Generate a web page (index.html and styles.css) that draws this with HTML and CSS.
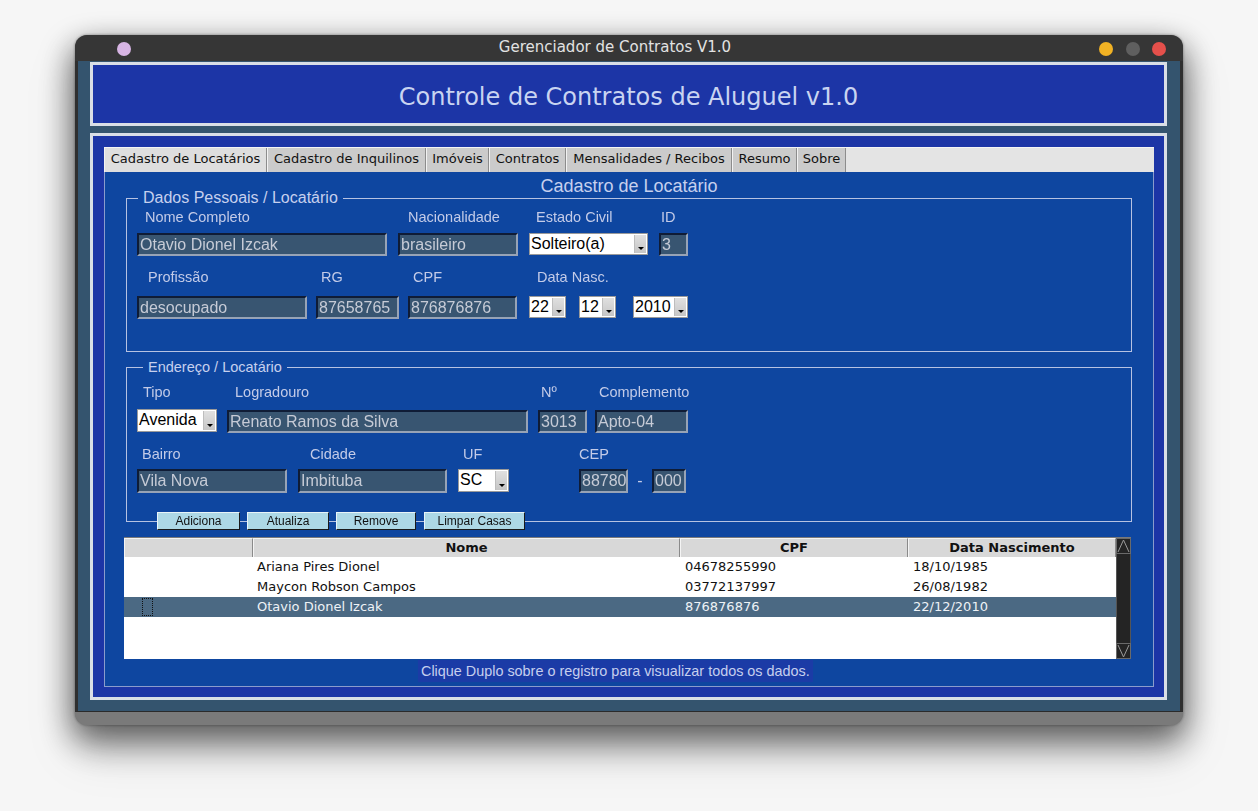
FILE: index.html
```html
<!DOCTYPE html>
<html lang="pt-BR">
<head>
<meta charset="utf-8">
<title>Gerenciador de Contratos V1.0</title>
<link rel="stylesheet" href="styles.css">
</head>
<body>
<div class="desk">
<div class="window">
  <div class="titlebar">
    <span class="dot dot-purple"></span>
    <div class="title">Gerenciador de Contratos V1.0</div>
    <div class="dots">
      <span class="dot dot-yellow"></span>
      <span class="dot dot-gray"></span>
      <span class="dot dot-red"></span>
    </div>
  </div>
  <div class="frame">
    <div class="header">Controle de Contratos de Aluguel v1.0</div>
    <div class="main">
      <div class="tabpanel">
        <div class="tabs">
          <div class="tab t1 active">Cadastro de Locatários</div>
          <div class="tab t2">Cadastro de Inquilinos</div>
          <div class="tab t3">Imóveis</div>
          <div class="tab t4">Contratos</div>
          <div class="tab t5">Mensalidades / Recibos</div>
          <div class="tab t6">Resumo</div>
          <div class="tab t7">Sobre</div>
        </div>
        <div class="content">
          <div class="content-title">Cadastro de Locatário</div>

          <div class="group g1">
            <span class="legend lg1">Dados Pessoais / Locatário</span>
            <div class="row g1r1">
              <div class="field f-nome"><div class="lbl">Nome Completo</div><div class="inp">Otavio Dionel Izcak</div></div>
              <div class="field f-nac"><div class="lbl">Nacionalidade</div><div class="inp">brasileiro</div></div>
              <div class="field f-civil"><div class="lbl">Estado Civil</div><div class="sel">Solteiro(a)<span class="btn-arrow"></span></div></div>
              <div class="field f-id"><div class="lbl">ID</div><div class="inp">3</div></div>
            </div>
            <div class="row g1r2">
              <div class="field f-prof"><div class="lbl">Profissão</div><div class="inp">desocupado</div></div>
              <div class="field f-rg"><div class="lbl">RG</div><div class="inp">87658765</div></div>
              <div class="field f-cpf"><div class="lbl">CPF</div><div class="inp">876876876</div></div>
              <div class="field f-data">
                <div class="lbl">Data Nasc.</div>
                <div class="sels">
                  <div class="sel s-dia">22<span class="btn-arrow"></span></div>
                  <div class="sel s-mes">12<span class="btn-arrow"></span></div>
                  <div class="sel s-ano">2010<span class="btn-arrow"></span></div>
                </div>
              </div>
            </div>
          </div>

          <div class="group g2">
            <span class="legend lg2">Endereço / Locatário</span>
            <div class="row g2r1">
              <div class="field f-tipo"><div class="lbl">Tipo</div><div class="sel">Avenida<span class="btn-arrow"></span></div></div>
              <div class="field f-log"><div class="lbl">Logradouro</div><div class="inp">Renato Ramos da Silva</div></div>
              <div class="field f-num"><div class="lbl">Nº</div><div class="inp">3013</div></div>
              <div class="field f-comp"><div class="lbl">Complemento</div><div class="inp">Apto-04</div></div>
            </div>
            <div class="row g2r2">
              <div class="field f-bairro"><div class="lbl">Bairro</div><div class="inp">Vila Nova</div></div>
              <div class="field f-cid"><div class="lbl">Cidade</div><div class="inp">Imbituba</div></div>
              <div class="field f-uf"><div class="lbl">UF</div><div class="sel">SC<span class="btn-arrow"></span></div></div>
              <div class="field f-cep">
                <div class="lbl">CEP</div>
                <div class="cep-row"><div class="inp cep1">88780</div><span class="dash">-</span><div class="inp cep2">000</div></div>
              </div>
            </div>
          </div>

          <div class="buttons">
            <div class="button b1">Adiciona</div>
            <div class="button b2">Atualiza</div>
            <div class="button b3">Remove</div>
            <div class="button b4">Limpar Casas</div>
          </div>

          <div class="table">
            <div class="grid">
              <div class="thead">
                <div class="th c0"></div>
                <div class="th c1">Nome</div>
                <div class="th c2">CPF</div>
                <div class="th c3">Data Nascimento</div>
              </div>
              <div class="tr">
                <div class="td c0"></div>
                <div class="td c1">Ariana Pires Dionel</div>
                <div class="td c2">04678255990</div>
                <div class="td c3">18/10/1985</div>
              </div>
              <div class="tr">
                <div class="td c0"></div>
                <div class="td c1">Maycon Robson Campos</div>
                <div class="td c2">03772137997</div>
                <div class="td c3">26/08/1982</div>
              </div>
              <div class="tr selected">
                <div class="td c0"><span class="focus"></span></div>
                <div class="td c1">Otavio Dionel Izcak</div>
                <div class="td c2">876876876</div>
                <div class="td c3">22/12/2010</div>
              </div>
            </div>
            <div class="scrollbar">
              <div class="sb-btn">
                <svg width="15" height="16" viewBox="0 0 15 16"><rect x="0.5" y="0.5" width="14" height="15" fill="none" stroke="#6a6a6a"/><polyline points="2,14 7.5,2 13,14" fill="none" stroke="#9a9a9a"/></svg>
              </div>
              <div class="sb-track"></div>
              <div class="sb-btn">
                <svg width="15" height="16" viewBox="0 0 15 16"><rect x="0.5" y="0.5" width="14" height="15" fill="none" stroke="#6a6a6a"/><polyline points="2,2 7.5,14 13,2" fill="none" stroke="#9a9a9a"/></svg>
              </div>
            </div>
          </div>

          <div class="footer"><span class="hint">Clique Duplo sobre o registro para visualizar todos os dados.</span></div>
        </div>
      </div>
    </div>
  </div>
  <div class="bottom-band"></div>
</div>
</div>
</body>
</html>
```

FILE: styles.css
```css
* { box-sizing: border-box; }

html, body { height: 100%; }

body {
  margin: 0;
  background: #f6f6f6;
  font-family: "Liberation Sans", Arial, sans-serif;
}

.desk {
  padding: 35px 0 0 75px;
  min-height: 811px;
  background: #f6f6f6;
}

.window {
  width: 1108px;
  height: 690px;
  border-radius: 12px;
  overflow: hidden;
  background: #7a7a7a;
  box-shadow: 0 16px 36px rgba(0,0,0,0.45), 0 0 3px rgba(0,0,0,0.4);
  filter: drop-shadow(0 10px 14px rgba(0,0,0,0.35));
  display: flex;
  flex-direction: column;
}

/* title bar */
.titlebar {
  height: 26px;
  background: #363636;
  display: flex;
  align-items: center;
  padding: 2px 17px 0 42px;
}
.title {
  flex: 1;
  text-align: center;
  color: #e2e2e2;
  font-family: "DejaVu Sans", sans-serif;
  font-size: 15px;
  line-height: 20px;
  margin-top: -4px;
}
.dots { display: flex; gap: 12.5px; }
.dot { width: 14px; height: 14px; border-radius: 50%; display: block; }
.dot-purple { background: #d7b5e4; }
.dot-yellow { background: #f1b224; }
.dot-gray { background: #5f5f5f; }
.dot-red { background: #e5504b; }

/* frame */
.frame {
  height: 651px;
  background: #34546e;
  border-left: 3px solid #2f2f2f;
  border-right: 3px solid #2f2f2f;
  border-bottom: 1px solid #2a2a2a;
  padding: 1px 13px 0 12px;
}
.bottom-band { flex: 1; background: #7a7a7a; }

.header {
  height: 64px;
  border: 3px solid #d9dee6;
  background: #1c35a6;
  color: #c9d4f1;
  font-family: "DejaVu Sans", sans-serif;
  font-size: 24px;
  text-align: center;
  line-height: 64px;
}

.main {
  margin-top: 7px;
  height: 567px;
  border: 3px solid #d9dee6;
  background: #1c35a6;
  padding: 11px 10px 10px 11px;
}

.tabpanel {
  height: 540px;
  display: flex;
  flex-direction: column;
}

.tabs {
  height: 25px;
  background: #e4e4e4;
  display: flex;
  border-top: 1px solid #f4f4f4;
}
.tab {
  height: 24px;
  line-height: 22px;
  font-family: "DejaVu Sans", sans-serif;
  font-size: 13px;
  color: #111;
  background: #cbcbcb;
  border-left: 1px solid #f2f2f2;
  border-right: 1px solid #8c8c8c;
  text-align: center;
  white-space: nowrap;
}
.tab.active { background: #dedede; }
.t1 { width: 163px; }
.t2 { width: 159px; }
.t3 { width: 63px; }
.t4 { width: 77px; }
.t5 { width: 166px; }
.t6 { width: 65px; }
.t7 { width: 49px; }

.content {
  flex: 1;
  background: #0e46a0;
  border: 1px solid #8a9ccc;
  border-top: none;
  display: flex;
  flex-direction: column;
}

.content-title {
  height: 26px;
  line-height: 28px;
  text-align: center;
  color: #c6d0ee;
  font-size: 18px;
}

/* groups */
.group {
  position: relative;
  margin: 0 21px;
  border: 1px solid #b6c2e2;
  padding-left: 10px;
}
.g1 { padding-top: 10px; padding-bottom: 32px; }
.g2 { margin-top: 15px; padding-top: 16px; padding-bottom: 28px; }

.legend {
  position: absolute;
  background: #0e46a0;
  color: #c6d0ee;
  padding: 0 5px;
  line-height: 18px;
}
.lg1 { top: -10px; left: 11px; font-size: 16px; }
.lg2 { top: -10px; left: 16px; font-size: 14.5px; }

.row { display: flex; align-items: flex-start; }
.field { display: flex; flex-direction: column; }

.lbl {
  height: 16px;
  line-height: 17px;
  font-size: 14.5px;
  color: #c3cbe8;
  white-space: nowrap;
}

.inp {
  background: #385571;
  color: #c6cbd6;
  font-size: 16px;
  line-height: 19px;
  padding-left: 1px;
  border: 2px solid;
  border-color: #0f1c36 #97a3b6 #97a3b6 #0f1c36;
  white-space: nowrap;
  overflow: hidden;
}

.sel {
  position: relative;
  background: #fff;
  color: #000;
  font-size: 16px;
  line-height: 20px;
  padding-left: 1px;
  border: 1px solid #9a9a9a;
  white-space: nowrap;
}
.btn-arrow {
  position: absolute;
  right: 1px;
  top: 1px;
  bottom: 1px;
  width: 12px;
  background: linear-gradient(#e0e0e0, #c6c6c6);
  border-left: 1px solid #bdbdbd;
}
.btn-arrow::after {
  content: "";
  position: absolute;
  left: 3px;
  bottom: 3px;
  border-left: 3px solid transparent;
  border-right: 3px solid transparent;
  border-top: 3px solid #000;
}

/* group 1 row 1 */
.g1r1 .inp, .g1r1 .sel { margin-top: 8px; }
.g1r1 .inp { height: 23px; }
.g1r1 .sel { height: 22px; }
.f-nome .inp { width: 250px; }
.f-nome .lbl { padding-left: 8px; }
.f-nac { margin-left: 11px; }
.f-nac .inp { width: 120px; }
.f-nac .lbl { padding-left: 10px; }
.f-civil { margin-left: 11px; }
.f-civil .sel { width: 119px; }
.f-civil .lbl { padding-left: 7px; }
.f-id { margin-left: 11px; }
.f-id .inp { width: 29px; }
.f-id .lbl { padding-left: 2px; }

/* group 1 row 2 */
.g1r2 { margin-top: 13px; }
.g1r2 .inp, .g1r2 .sels { margin-top: 11px; }
.g1r2 .inp { height: 23px; }
.f-prof .inp { width: 170px; }
.f-prof .lbl { padding-left: 11px; }
.f-rg { margin-left: 9px; }
.f-rg .inp { width: 83px; }
.f-rg .lbl { padding-left: 5px; }
.f-cpf { margin-left: 9px; }
.f-cpf .inp { width: 109px; }
.f-cpf .lbl { padding-left: 5px; }
.f-data { margin-left: 12px; }
.f-data .lbl { padding-left: 8px; }
.sels { display: flex; }
.sels .sel { height: 22px; }
.s-dia { width: 37px; }
.s-mes { width: 37px; margin-left: 13px; }
.s-ano { width: 55px; margin-left: 17px; }

/* group 2 row 1 */
.g2r1 .inp { margin-top: 10px; height: 23px; }
.g2r1 .sel { margin-top: 9px; height: 23px; }
.f-tipo .sel { width: 80px; }
.f-tipo .lbl { padding-left: 6px; }
.f-log { margin-left: 10px; }
.f-log .inp { width: 301px; }
.f-log .lbl { padding-left: 8px; }
.f-num { margin-left: 10px; }
.f-num .inp { width: 49px; }
.f-num .lbl { padding-left: 3px; }
.f-comp { margin-left: 8px; }
.f-comp .inp { width: 93px; }
.f-comp .lbl { padding-left: 4px; }

/* group 2 row 2 */
.g2r2 { margin-top: 13px; }
.g2r2 .inp, .g2r2 .sel, .g2r2 .cep-row { margin-top: 7px; }
.g2r2 .inp { height: 24px; }
.g2r2 .cep-row .inp { margin-top: 0; }
.g2r2 .sel { height: 23px; }
.f-bairro .inp { width: 150px; }
.f-bairro .lbl { padding-left: 5px; }
.f-cid { margin-left: 11px; }
.f-cid .inp { width: 149px; }
.f-cid .lbl { padding-left: 12px; }
.f-uf { margin-left: 11px; }
.f-uf .sel { width: 51px; }
.f-uf .lbl { padding-left: 5px; }
.f-cep { margin-left: 70px; }
.cep-row { display: flex; align-items: center; }
.cep1 { width: 49px; }
.cep2 { width: 34px; }
.dash { width: 24px; text-align: center; color: #c3cbe8; font-size: 16px; }

/* buttons */
.buttons {
  display: flex;
  margin: -10px 0 0 52px;
  position: relative;
}
.button {
  height: 18px;
  line-height: 17px;
  background: #add8e6;
  color: #111;
  font-size: 12px;
  text-align: center;
  border: 1px solid;
  border-color: #e8f4f8 #1a1a1a #1a1a1a #e8f4f8;
}
.b1 { width: 83px; }
.b2 { width: 82px; margin-left: 7px; }
.b3 { width: 80px; margin-left: 7px; }
.b4 { width: 101px; margin-left: 8px; }

/* table */
.table {
  margin: 7px 0 0 19px;
  width: 1007px;
  height: 122px;
  background: #fff;
  display: flex;
  border-top: 1px solid #7a7a7a;
}
.grid { width: 992px; font-family: "DejaVu Sans", sans-serif; font-size: 13px; }
.thead { display: flex; height: 19px; background: #d8d8d8; }
.th {
  height: 19px;
  line-height: 18px;
  font-weight: bold;
  color: #111;
  text-align: center;
  border-left: 1px solid #f4f4f4;
  border-right: 1px solid #8a8a8a;
  border-top: 1px solid #f4f4f4;
}
.c0 { width: 129px; }
.c1 { width: 427px; }
.c2 { width: 228px; }
.c3 { width: 208px; }
.tr { display: flex; height: 20px; line-height: 19px; color: #111; }
.td { white-space: nowrap; }
.td.c1 { padding-left: 4px; }
.td.c2 { padding-left: 5px; }
.td.c3 { padding-left: 5px; }
.tr.selected { background: #4b6983; color: #eef2f6; }
.focus {
  display: block;
  margin: 1px 0 0 18px;
  width: 11px;
  height: 18px;
  border: 1px dotted #111;
}

.scrollbar {
  width: 15px;
  background: #242424;
  display: flex;
  flex-direction: column;
}
.sb-btn { height: 16px; }
.sb-btn svg { display: block; }
.sb-track { flex: 1; border-left: 1px solid #555; border-right: 1px solid #555; }

.footer {
  margin-top: 1px;
  height: 22px;
  padding-left: 313px;
}
.hint {
  display: inline-block;
  background: #1b3ba6;
  color: #c6cfee;
  font-size: 14.4px;
  line-height: 22px;
  padding: 0 3px;
}
```
